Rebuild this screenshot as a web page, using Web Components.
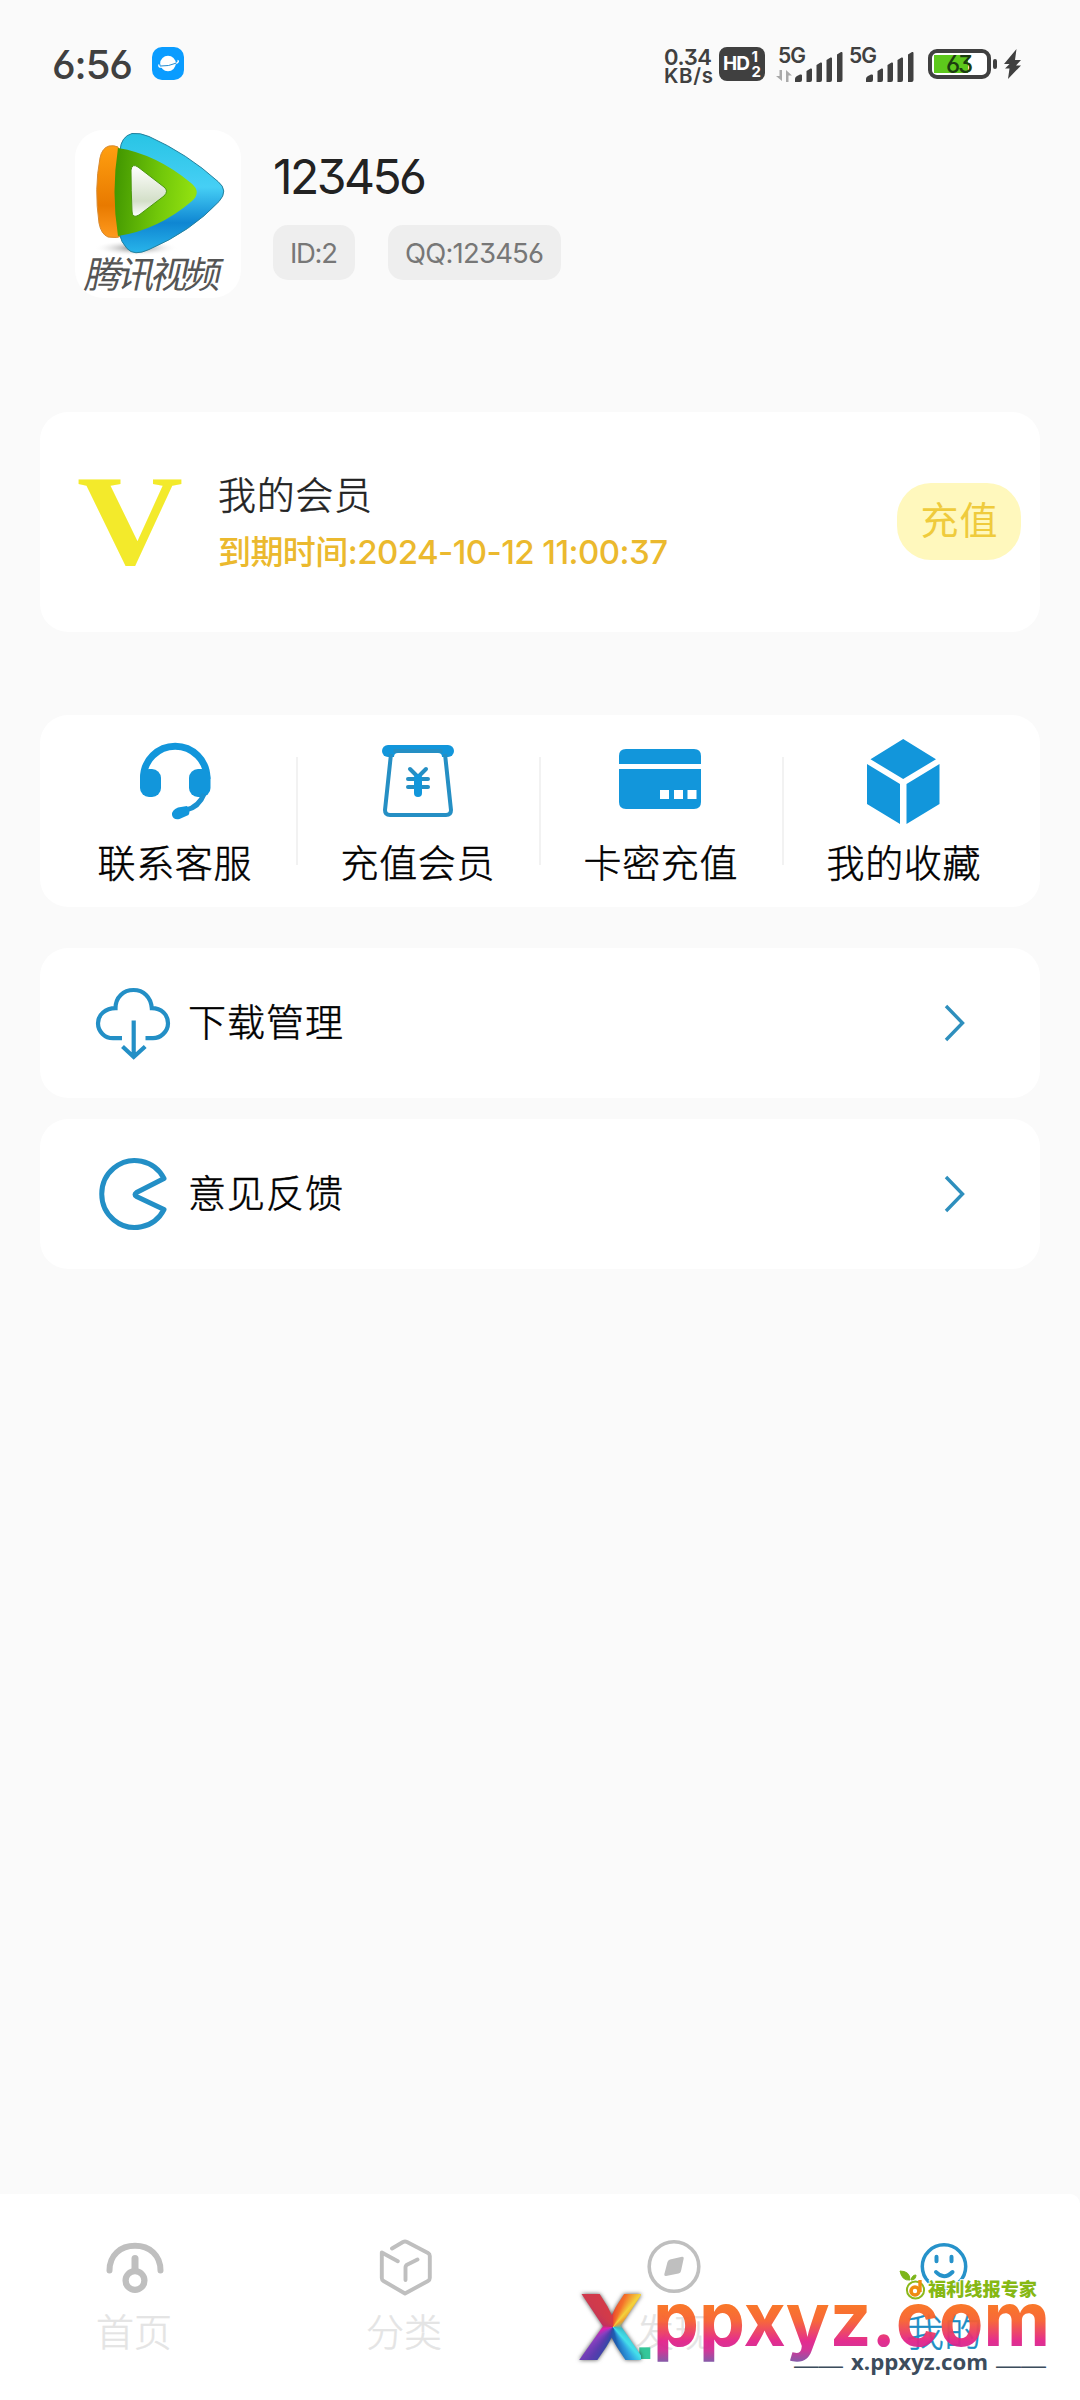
<!DOCTYPE html>
<html lang="zh-CN">
<head>
<meta charset="utf-8">
<title>我的</title>
<style>
html,body{margin:0;padding:0}
body{width:1080px;height:2400px;overflow:hidden;background:#fafafa;font-family:Inter,"Noto Sans CJK SC",sans-serif;font-feature-settings:"cv03","cv09"}
</style>
</head>
<body>
<mine-page></mine-page>
<script>
const define=(name,html,after)=>customElements.define(name,class extends HTMLElement{
  connectedCallback(){
    if(this.shadowRoot)return;
    this.attachShadow({mode:'open'}).innerHTML=typeof html==='function'?html(this):html;
    if(after)after(this);
  }
});

/* Single-line text tracked so that it spans the width given in "w". */
define('fit-text',`<style>:host{display:block;white-space:nowrap;flex:none}span{display:inline-block}</style><span><slot></slot></span>`,el=>{
  const w=+el.getAttribute('w');
  if(!w)return;
  const s=el.shadowRoot.querySelector('span');
  const text=el.shadowRoot.querySelector('slot').assignedNodes({flatten:true}).map(n=>n.textContent).join('');
  const n=[...text].length;
  const ls=(w-s.getBoundingClientRect().width)/Math.max(1,n-1);
  s.style.letterSpacing=ls+'px';
  s.style.marginRight=-ls+'px';
  el.style.width=w+'px';
});

const icons={
 headset:['0 0 80 88',`<g transform="translate(2 0)"><path d="M7.500 36V35a31.700 31.700 0 0 1 63.400 0v1" fill="none" stroke="#1296db" stroke-width="7"/><rect x="4" y="26" width="21" height="28" rx="9" fill="#1296db"/><rect x="53" y="26" width="21.500" height="28" rx="9" fill="#1296db"/><path d="M68 51q-5 13-18 16" fill="none" stroke="#1b91d0" stroke-width="5"/><path d="M42 64.500l9-1.500q4 4 1.500 9l-9 4q-6 1.500-7.500-4-.5-5 6-7.500z" fill="#1296db"/></g>`],
 bag:['0 0 80 88',`<g transform="translate(1 0)"><rect x="4" y="2" width="72" height="12" rx="6" fill="#1296db"/><path d="M19 8h42" stroke="#1296db" stroke-width="4"/><path d="M15.500 8h49M13 11L7 67q0 5 5 5h56q5 0 5-5L67 11" fill="none" stroke="#258fc4" stroke-width="4"/><path d="M16 14q0-4 4-4h40q4 0 4 4z" fill="#fff"/><path d="M32 26l8 8 8-8M30 36h20M30 44h20" fill="none" stroke="#258fc4" stroke-width="4" stroke-linecap="round" stroke-linejoin="round"/><path d="M40 35v15" stroke="#1296db" stroke-width="8" stroke-linecap="round"/></g>`],
 card:['0 0 82 88',`<path d="M0 21V13q0-7 7-7h68q7 0 7 7v8zM0 26h82v33q0 7-7 7H7q-7 0-7-7z" fill="#1296db"/><path d="M41 47h9v9h-9zM55 47h9v9h-9zM68.500 47h9v9h-9z" fill="#fff"/>`],
 cube:['0 0 74 88',`<path d="M37.200-4L70 16.300 37.200 36 4.500 16.300zM1 21l33 20v40L1 61zM73.500 21l-33 20v40l33-20z" fill="#1296db"/>`],
 cloud:['0 0 76 76',`<path d="M27 54.200h-9c-8 0-15-6.500-15-15 0-8.500 7.500-15 17.500-15C20.500 13 28.500 6 38.500 6s17.500 7 18.300 18.200c9.700 0 16.200 6.500 16.200 15 0 8.500-7.500 15-15 15h-7.500M38.700 36.500v36M27.500 62.500l11.200 10.500 11.500-10.500" fill="none" stroke="#238fc6" stroke-width="4.200"/>`],
 pac:['0 0 72 76',`<path d="M65.500 20.500A33 33.500 0 1 0 65.500 51.500L38 38.500q-3-2 0-4z" fill="none" stroke="#238fc6" stroke-width="5" stroke-linejoin="round" transform="translate(1.500 3)"/>`],
 chevron:['0 0 22 38',`<path d="M2 2l16.500 17L2 36" fill="none" stroke="#2e8fbd" stroke-width="3.400"/>`],
 gauge:['0 0 60 60',`<path d="M4.500 34.500C4.500 19 15.500 9.800 30 9.800S55.500 19 55.500 34.500" fill="none" stroke="#bfbfbf" stroke-width="6" stroke-linecap="round"/><path d="M30 22.500V33" stroke="#bfbfbf" stroke-width="7" stroke-linecap="round"/><circle cx="30" cy="44.500" r="9.400" fill="none" stroke="#bfbfbf" stroke-width="6.300"/>`],
 box:['0 0 60 60',`<path d="M17 12.500l11-6.500q2-1 4 0L53 17q1.800 1 1.800 3v22q0 2-1.800 3L30 57.500 8.500 45q-1.700-1-1.700-3V16.500l16 8.700M42.500 23.500l-10 5q-2 1-2 3V44" fill="none" stroke="#bfbfbf" stroke-width="3.900" stroke-linecap="round" stroke-linejoin="round"/>`],
 compass:['0 0 60 60',`<g transform="translate(-1 0)"><circle cx="30" cy="30.500" r="24.800" fill="none" stroke="#bfbfbf" stroke-width="3.600"/><path d="M26 23.500l12-2.700q2-.3 1.700 1.700L37 35q-.5 2-2.500 2.500L22 40q-2 .3-1.700-1.700L23.500 26q.5-2 2.500-2.500z" fill="#bfbfbf"/></g>`],
 smile:['0 0 60 60',`<g transform="translate(-1 0)"><circle cx="30" cy="30.500" r="21.700" fill="none" stroke="#2692ca" stroke-width="3.500"/><path d="M22.500 20.800v4.500M37.500 20.800v4.500" stroke="#2692ca" stroke-width="4" stroke-linecap="round"/><path d="M22 36q8 8.500 16.500 0" fill="none" stroke="#2692ca" stroke-width="4" stroke-linecap="round"/></g>`],
 planet:['0 0 32 33',`<rect width="32" height="33" rx="10" fill="#0a9cff"/><circle cx="16" cy="16.500" r="7.800" fill="#fff"/><path d="M7 17.500q-1 3 3 2.500 7-.5 15-4 2.500-2 .5-2.500" fill="none" stroke="#fff" stroke-width="1.400"/><path d="M8.500 19q8 .5 16-3" fill="none" stroke="#0a7ec8" stroke-width=".9"/>`],
 arrows:['0 0 16 12',`<path d="M6 0v11L0 6h3.500V0zM10 12V0l6 5.500h-3.500V12z" fill="#a9a9a9"/>`],
 bars:['0 0 50 32',`<path d="M1 31v-3q0-2 2-3l3-1.500q2-.5 2 1V29q0 2-2 2zM12.500 31V20l4-2.500q1.500-.5 1.500 1V29q0 2-2 2zM22.500 31V14l4-2.500q1.500-.5 1.500 1V29q0 2-2 2zM32.500 31V9l4-2.500q1.500-.5 1.500 1V29q0 2-2 2zM43 31V3.500L47 1q1.500-.5 1.500 1V29q0 2-2 2z" fill="#404040"/>`],
 bolt:['0 0 18 30',`<path d="M12.500 0L0 15h5.500L1 19.500h4.500L4 30 17 16.500h-5L17 11h-6z" fill="#404040"/>`]
};
define('ui-icon',el=>{
  const [vb,body]=icons[el.getAttribute('name')],[,,w,h]=vb.split(' ');
  return `<style>:host{display:block;flex:none;width:${w}px;height:${h}px}svg{display:block;overflow:visible}</style><svg width="${w}" height="${h}" viewBox="${vb}">${body}</svg>`;
});

define('signal-meter',el=>`<style>
:host{display:flex;flex-direction:column;width:69px;height:34px;flex:none}
.g{font-size:21px;font-weight:600;line-height:15px;height:15px;color:#404040;margin-left:3px}
.r{display:flex;margin-top:-12px;align-items:flex-end;justify-content:flex-end}
.a{margin:0 2px 1px 0}
</style><fit-text class="g" w="28">5G</fit-text><div class="r">${el.hasAttribute('data')?'<ui-icon class="a" name="arrows"></ui-icon>':''}<ui-icon name="bars"></ui-icon></div>`);

define('battery-gauge',`<style>
:host{display:flex;align-items:center;flex:none}
.b{box-sizing:border-box;width:63px;height:30px;border:4px solid #404040;border-radius:9px;padding:2px;background:linear-gradient(#5dc81c,#5dc81c) 2px 2px/34px 18px no-repeat,#fff;display:flex;justify-content:center}
.t{font-size:24px;line-height:19px;color:#1c3d10;font-weight:500}
.c{width:4px;height:10px;border-radius:2px;background:#404040;margin-left:2px}
</style><div class="b"><fit-text class="t" w="27">63</fit-text></div><div class="c"></div>`);

define('status-bar',`<style>
:host{display:flex;box-sizing:border-box;height:128px;padding:0 58px 0 52px;align-items:flex-start;color:#404040}
.time{font-size:40px;font-weight:500;line-height:40px;margin-top:45px}
.app{margin:47px auto 0 19px}
.net{margin:47px 7px 0 0;font-size:22px;font-weight:600;line-height:20px;width:48px}
.net .k{font-size:20.500px;line-height:18px}
.hd{box-sizing:border-box;width:46px;height:34px;border-radius:8px;background:#404040;color:#fff;display:flex;align-items:center;justify-content:space-between;padding:0 4px;margin:47px 10px 0 0;font-weight:700;font-size:19px;line-height:34px}
.n{font-size:15px;line-height:15px}
signal-meter{margin:48px 2px 0 0}
battery-gauge{margin:49px 7px 0 11px}
.bolt{margin-top:49px}
</style>
<fit-text class="time" w="81">6:56</fit-text><ui-icon class="app" name="planet"></ui-icon>
<div class="net"><fit-text w="48">0.34</fit-text><fit-text class="k" w="49">KB/s</fit-text></div>
<div class="hd"><fit-text w="27">HD</fit-text><div class="n"><div>1</div><div>2</div></div></div>
<signal-meter data></signal-meter><signal-meter></signal-meter>
<battery-gauge></battery-gauge><ui-icon class="bolt" name="bolt"></ui-icon>`);

define('video-avatar',`<style>
:host{display:flex;flex-direction:column;align-items:center;width:166px;height:168px;border-radius:28px;background:#fff;flex:none}
svg{display:block;overflow:visible}
fit-text{font-size:37px;line-height:36px;height:36px;color:#555;transform:skewX(-12deg)}
</style>
<svg width="166" height="127" viewBox="75 130 166 127">
<defs>
<linearGradient id="o" x1="0" y1="0" x2="0" y2="1"><stop offset="0" stop-color="#ff9f10"/><stop offset=".65" stop-color="#e87a00"/><stop offset="1" stop-color="#ff9a1e"/></linearGradient>
<linearGradient id="b" x1="0" y1="0" x2="0" y2="1"><stop offset="0" stop-color="#28c4e4"/><stop offset=".45" stop-color="#46cff5"/><stop offset=".75" stop-color="#0f86d2"/><stop offset="1" stop-color="#28b4ea"/></linearGradient>
<linearGradient id="g" x1="0" y1="0" x2="1" y2=".1"><stop offset="0" stop-color="#3f9400"/><stop offset=".6" stop-color="#72c80a"/><stop offset="1" stop-color="#92e010"/></linearGradient>
<linearGradient id="w" x1="0" y1="0" x2="0" y2="1"><stop offset="0" stop-color="#fff"/><stop offset=".7" stop-color="#d3dfc8"/><stop offset="1" stop-color="#fff"/></linearGradient>
<radialGradient id="s"><stop offset="0" stop-color="#777"/><stop offset="1" stop-color="#fff" stop-opacity="0"/></radialGradient>
</defs>
<ellipse cx="136" cy="248" rx="42" ry="8" fill="url(#s)"/>
<path d="M109 146q5-1 9 1l7 88q-8 4-17 2-7-3-9-14-5-34 1-65 2-10 9-12z" fill="url(#o)" stroke="#d98a30" stroke-width="1"/>
<path d="M132 133.500q8-1 17 3 38 17 69 45 11 9 1 20-28 30-70 48-15 7-22-1-6-6-8-16-7-40 1-82 1-14 12-17z" fill="url(#b)" stroke="#24809c" stroke-width="1"/>
<path d="M118 148q38 6 73 35 11 9 1 18-34 29-74 35-7-44 0-88z" fill="url(#g)"/>
<path d="M131 170q1-7 7-3l26 20q5 4 0 9l-25 19q-7 4-7-4-1-20-1-41z" fill="url(#w)" stroke="#4b9711" stroke-width="1"/>
</svg><fit-text w="144">腾讯视频</fit-text>`);

define('info-chip',`<style>:host{display:flex;align-items:center;height:55px;padding:0 17px;border-radius:15px;background:#eee;color:#777;font-size:27.500px;line-height:38px}</style><slot></slot>`);

define('profile-header',`<style>
:host{display:flex;padding:2px 0 0 75px;height:282px;box-sizing:border-box}
.i{margin-left:32px;padding-top:17px}
.n{font-size:48px;line-height:60px;color:#222;margin-bottom:18px}
.c{display:flex;gap:33px}
</style><video-avatar></video-avatar><div class="i"><fit-text class="n" w="154">123456</fit-text><div class="c"><info-chip><fit-text w="48">ID:2</fit-text></info-chip><info-chip><fit-text w="139">QQ:123456</fit-text></info-chip></div></div>`);

define('ui-card',`<style>:host{display:flex;box-sizing:border-box;align-items:center;background:#fff;border-radius:28px;margin:0 40px}</style><slot></slot>`);

define('vip-card',`<style>
:host{display:block}
ui-card{height:220px;padding:0 19px 0 36px}
svg{display:block;flex:none;overflow:visible}
.m{flex:1;margin-left:33px;padding-top:4px}
.t{font-size:38px;line-height:56px;color:#222;font-weight:300;-webkit-text-stroke:.5px #222}
.d{font-size:33px;line-height:58px;color:#ebb92e;font-weight:500}
.b{width:124px;height:77px;border-radius:34px;background:#fff8bd;display:flex;align-items:center;justify-content:center;font-size:38px;line-height:58px;padding-bottom:2px;box-sizing:border-box;margin-bottom:2px;color:#efcb3c}
</style><ui-card>
<svg width="109" height="110" viewBox="0 0 109 110"><text x="1" y="96.500" textLength="106" lengthAdjust="spacingAndGlyphs" font-family="Liberation Serif" font-weight="700" font-size="130" fill="#f3ea2b">V</text></svg>
<div class="m"><fit-text class="t" w="154">我的会员</fit-text><fit-text class="d" w="450">到期时间:2024-10-12 11:00:37</fit-text></div>
<div class="b"><fit-text w="77">充值</fit-text></div></ui-card>`);

define('grid-item',el=>`<style>:host{display:flex;flex-direction:column;align-items:center;width:241px;height:192px;box-sizing:border-box;padding-top:28px}
ui-icon{margin-right:3px}
.t{font-size:38px;line-height:60px;color:#000;font-weight:300;-webkit-text-stroke:.5px #000;margin:2px 2px 0 0}</style><ui-icon name="${el.getAttribute('icon')}"></ui-icon><fit-text class="t" w="154"><slot></slot></fit-text>`);

define('quick-grid',`<style>:host{display:block;margin-top:83px}ui-card{height:192px;justify-content:center}i{width:2px;height:108px;background:#f2f2f2}</style><ui-card>
<grid-item icon="headset">联系客服</grid-item><i></i><grid-item icon="bag">充值会员</grid-item><i></i><grid-item icon="card">卡密充值</grid-item><i></i><grid-item icon="cube">我的收藏</grid-item></ui-card>`);

define('list-row',el=>`<style>:host{display:block}ui-card{height:150px;padding:0 74px 0 55px}
.i{width:76px;display:flex;justify-content:center;padding-bottom:2px}
.t{font-size:38px;line-height:60px;color:#000;font-weight:300;-webkit-text-stroke:.5px #000;margin:-2px auto 0 17px}</style><ui-card><div class="i"><ui-icon name="${el.getAttribute('icon')}"></ui-icon></div><fit-text class="t" w="155"><slot></slot></fit-text><ui-icon name="chevron"></ui-icon></ui-card>`);

define('tab-item',el=>`<style>:host{display:flex;flex-direction:column;align-items:center;flex:1;padding-top:42px}
.t{font-size:38px;line-height:60px;color:#e4e4e4;font-weight:300;-webkit-text-stroke:.4px currentColor;margin:6px 2px 0 0}:host([on]) .t{color:#1c8dc4}</style><ui-icon name="${el.getAttribute('icon')}"></ui-icon><fit-text class="t"><slot></slot></fit-text>`);

define('tab-bar',`<style>:host{display:flex;height:206px;background:#fff;margin-top:auto;border-radius:0 10px 0 0}</style>
<tab-item icon="gauge">首页</tab-item><tab-item icon="box">分类</tab-item><tab-item icon="compass">发现</tab-item><tab-item icon="smile" on>我的</tab-item>`);

/* Site stamp laid over the tab bar. */
define('site-stamp',`<style>
:host{position:absolute;left:576px;top:2262px;width:478px;height:122px}
svg{display:block;overflow:visible}
.x{position:absolute;left:1px;top:22px;width:64px;height:86px;text-align:center;font:800 91px/86px Inter,sans-serif;color:transparent;
background:conic-gradient(from 0deg at 36px 43px,#e8452f 0deg,#f4702a 22deg,#f3d33c 40deg,#f0a030 55deg,#38b8c8 100deg,#45e0ea 138deg,#2f9fe0 150deg,#1d5fb0 168deg,#2f4aa8 195deg,#5a3cae 215deg,#8a3fc0 235deg,#e01fb0 258deg,#c2305f 280deg,#cf3a4c 320deg,#d83a45 360deg);
-webkit-background-clip:text;background-clip:text;filter:drop-shadow(0 0 2px rgba(40,40,40,.8))}
</style>
<svg width="478" height="122" viewBox="576 2262 478 122">
<defs>
<linearGradient id="m" gradientUnits="userSpaceOnUse" x1="0" y1="2303" x2="0" y2="2362"><stop offset="0" stop-color="#f9721c"/><stop offset=".3" stop-color="#f7602f"/><stop offset=".65" stop-color="#e2218a"/><stop offset=".8" stop-color="#cf2c92"/><stop offset="1" stop-color="#7d53a4"/></linearGradient>
</defs>
<text x="634" y="2358.500" font-family="Liberation Sans" font-weight="700" font-size="78" fill="#34c79a">.</text>
<text x="653" y="2346" textLength="397" lengthAdjust="spacingAndGlyphs" font-family="Inter" font-weight="700" font-size="76" fill="url(#m)" fill-opacity=".95">ppxyz.com</text>
<circle cx="915.500" cy="2290" r="8.200" fill="none" stroke="#fff" stroke-width="6"/>
<circle cx="915.500" cy="2290" r="8.600" fill="#fff" stroke="#8ab81b" stroke-width="2"/>
<circle cx="915" cy="2291" r="4" fill="none" stroke="#ef8a10" stroke-width="3.600"/><path d="M920 2280v12" stroke="#ef8a10" stroke-width="3.400"/>
<path d="M900 2271q10 0 10 9-8 1-10-9zM911 2280q1-5 5-5 0 5-5 5z" fill="#7cb51a" stroke="#7cb51a"/>
<text x="928" y="2296" textLength="109" lengthAdjust="spacingAndGlyphs" font-family="Noto Sans CJK SC" font-weight="900" font-size="18" fill="#86b814" stroke="#fff" stroke-width="2" paint-order="stroke">福利线报专家</text>
<g fill="#3c4c5c"><text x="794" y="2373" textLength="49" lengthAdjust="spacingAndGlyphs" font-family="Liberation Sans" font-size="24">——</text>
<text x="851" y="2370" textLength="137" lengthAdjust="spacingAndGlyphs" font-family="Open Sans" font-weight="700" font-size="22">x.ppxyz.com</text>
<text x="996" y="2373" textLength="50" lengthAdjust="spacingAndGlyphs" font-family="Liberation Sans" font-size="24">——</text></g>
</svg><div class="x">X</div>`);

define('mine-page',`<style>:host{display:flex;flex-direction:column;position:relative;width:1080px;height:2400px;background:#fafafa}
.l{display:flex;flex-direction:column;gap:21px;margin-top:41px}</style>
<status-bar></status-bar><profile-header></profile-header><vip-card style="margin-top:2px"></vip-card><quick-grid></quick-grid>
<div class="l"><list-row icon="cloud">下载管理</list-row><list-row icon="pac">意见反馈</list-row></div>
<tab-bar></tab-bar><site-stamp></site-stamp>`);
</script>
</body>
</html>
